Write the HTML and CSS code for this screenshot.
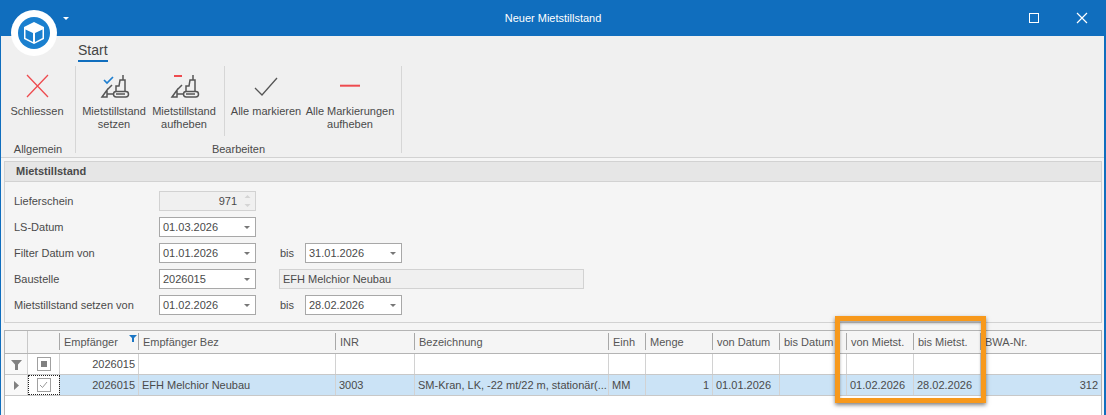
FILE: index.html
```html
<!DOCTYPE html>
<html lang="de">
<head>
    <meta charset="UTF-8">
    <title>Neuer Mietstillstand</title>
    <link rel="stylesheet" href="styles.css">
</head>
<body>

    <div class="window">

        <!-- Title bar -->
        <div class="titlebar">
            <div class="title">Neuer Mietstillstand</div>
            <div class="win-buttons">
                <svg width="46" height="36" viewBox="0 0 46 36"><rect x="15.500" y="13.500" width="9" height="9" fill="none" stroke="#fff"/></svg>
                <svg width="46" height="36" viewBox="0 0 46 36"><path d="M17 13l10 10M27 13l-10 10" fill="none" stroke="#fff" stroke-width="1.2"/></svg>
            </div>
        </div>

        <!-- App button -->
        <div class="app-button">
            <svg width="46" height="46" viewBox="0 0 46 46">
                <circle cx="23" cy="23" r="23" fill="#fff"/>
                <circle cx="23" cy="23" r="16" fill="#1b80cf"/>
                <path d="M23 12l10 5v12l-10 5-10-5V17z" fill="#fff"/>
                <path d="M14.500 19.500l7.500 3.500v9l-7.500-4zM31.500 19.500L24 23v9l7.500-4z" fill="#1b80cf"/>
            </svg>
        </div>
        <svg class="qat-arrow" width="6" height="3" viewBox="0 0 6 3"><path d="M0 0h6L3 3z" fill="#fff"/></svg>

        <!-- Ribbon -->
        <div class="ribbon">
            <div class="tabs">
                <span class="tab">Start</span>
            </div>
            <div class="groups">
                <div class="group group-allgemein">
                    <div class="group-items">
                        <div class="rb-btn btn-close">
                            <svg width="32" height="32" viewBox="0 0 32 32"><path d="M6 5l21 22M27 5L6 27" fill="none" stroke="#ee4b4f" stroke-width="1.300"/></svg>
                            <span>Schliessen</span>
                        </div>
                    </div>
                    <div class="group-label">Allgemein</div>
                </div>

                <div class="group group-bearbeiten">
                    <div class="group-items">
                        <div class="rb-btn btn-mst">
                            <svg width="32" height="32" viewBox="0 0 32 32">
                                <path d="M6 10l3 3 6-6" fill="none" stroke="#1e7fd0" stroke-width="1.700"/>
                                <g fill="none" stroke="#555" stroke-width="1.500">
                                    <rect x="15.500" y="21.500" width="15" height="5.500" rx="2.700"/>
                                    <path d="M18 21v-5h3l1-6h5v11M25 5v5M18 24h9"/>
                                    <path d="M4 27l5-7v7zM9 20l5-5M9 24h6"/>
                                </g>
                            </svg>
                            <span>Mietstillstand<br>setzen</span>
                        </div>
                        <div class="rb-btn btn-mst">
                            <svg width="32" height="32" viewBox="0 0 32 32">
                                <path d="M6 6h8" fill="none" stroke="#ee4b4f" stroke-width="2"/>
                                <g fill="none" stroke="#555" stroke-width="1.500">
                                    <rect x="15.500" y="21.500" width="15" height="5.500" rx="2.700"/>
                                    <path d="M18 21v-5h3l1-6h5v11M25 5v5M18 24h9"/>
                                    <path d="M4 27l5-7v7zM9 20l5-5M9 24h6"/>
                                </g>
                            </svg>
                            <span>Mietstillstand<br>aufheben</span>
                        </div>
                        <div class="rb-sep"></div>
                        <div class="rb-btn btn-all">
                            <svg width="32" height="32" viewBox="0 0 32 32"><path d="M5 18l7 7L27 8" fill="none" stroke="#555" stroke-width="1.300"/></svg>
                            <span>Alle markieren</span>
                        </div>
                        <div class="rb-btn btn-none">
                            <svg width="32" height="32" viewBox="0 0 32 32"><path d="M6 15.700h20" fill="none" stroke="#ee4b4f" stroke-width="2"/></svg>
                            <span>Alle Markierungen<br>aufheben</span>
                        </div>
                    </div>
                    <div class="group-label">Bearbeiten</div>
                </div>
            </div>
        </div>

        <!-- Content -->
        <div class="content">

            <div class="panel">
                <div class="panel-header">Mietstillstand</div>
                <div class="form">
                    <label>Lieferschein</label>
                    <div class="field spin disabled"><span class="num">971</span>
                        <svg width="9" height="16" viewBox="0 0 9 16"><path d="M1.500 5l3-3 3 3zM1.500 11l3 3 3-3z" fill="#d4d4d4"/></svg>
                    </div>
                    <div class="empty"></div><div class="empty"></div>

                    <label>LS-Datum</label>
                    <div class="field">01.03.2026<i class="arrow"></i></div>
                    <div class="empty"></div><div class="empty"></div>

                    <label>Filter Datum von</label>
                    <div class="field">01.01.2026<i class="arrow"></i></div>
                    <span class="bis">bis</span>
                    <div class="field">31.01.2026<i class="arrow"></i></div>

                    <label>Baustelle</label>
                    <div class="field">2026015<i class="arrow"></i></div>
                    <div class="field disabled wide">EFH Melchior Neubau</div>

                    <label>Mietstillstand setzen von</label>
                    <div class="field">01.02.2026<i class="arrow"></i></div>
                    <span class="bis">bis</span>
                    <div class="field">28.02.2026<i class="arrow"></i></div>
                </div>
            </div>

            <div class="grid">
                <div class="row head">
                    <div class="c"></div>
                    <div class="c"></div>
                    <div class="c sorted">Empfänger<svg width="8" height="7" viewBox="0 0 8 7"><path d="M0 0h8L5 3v4H3V3z" fill="#1b76c4"/></svg></div>
                    <div class="c">Empfänger Bez</div>
                    <div class="c">INR</div>
                    <div class="c">Bezeichnung</div>
                    <div class="c">Einh</div>
                    <div class="c">Menge</div>
                    <div class="c">von Datum</div>
                    <div class="c">bis Datum</div>
                    <div class="c">von Mietst.</div>
                    <div class="c">bis Mietst.</div>
                    <div class="c">BWA-Nr.</div>
                </div>
                <div class="row filter">
                    <div class="c ind"><svg width="11" height="11" viewBox="0 0 11 11"><path d="M0 1h11L7 5.500V11H4V5.500z" fill="#808080"/></svg></div>
                    <div class="c chk"><span class="box"><i></i></span></div>
                    <div class="c right">2026015</div>
                    <div class="c"></div><div class="c"></div><div class="c"></div><div class="c"></div>
                    <div class="c"></div><div class="c"></div><div class="c"></div><div class="c"></div>
                    <div class="c"></div><div class="c last"></div>
                </div>
                <div class="row data">
                    <div class="c ind"><svg width="5" height="9" viewBox="0 0 5 9"><path d="M0 0l5 4.500L0 9z" fill="#808080"/></svg></div>
                    <div class="c chk focus"><span class="box"><svg width="9" height="8" viewBox="0 0 9 8"><path d="M1 4l2.500 2.500L8 1" fill="none" stroke="#999"/></svg></span></div>
                    <div class="c right">2026015</div>
                    <div class="c">EFH Melchior Neubau</div>
                    <div class="c">3003</div>
                    <div class="c">SM-Kran, LK, -22 mt/22 m, stationär(...</div>
                    <div class="c">MM</div>
                    <div class="c right">1</div>
                    <div class="c">01.01.2026</div>
                    <div class="c"></div>
                    <div class="c">01.02.2026</div>
                    <div class="c">28.02.2026</div>
                    <div class="c right last">312</div>
                </div>
            </div>

        </div>

        <!-- Highlight around the two columns -->
        <div class="highlight"></div>

    </div>

</body>
</html>
```

FILE: styles.css
```css
* {
    margin: 0;
    padding: 0;
    box-sizing: border-box;
}

html, body {
    height: 100%;
    overflow: hidden;
}

body {
    font-family: "Liberation Sans", Arial, sans-serif;
    font-size: 11px;
    color: #4a4a4a;
    background: #fff;
}

.window {
    position: relative;
    height: 415px;
    border-left: 1px solid #106ebe;
    border-right: 2px solid #106ebe;
    display: flex;
    flex-direction: column;
}

/* Title bar */
.titlebar {
    height: 36px;
    margin: 0 -2px 0 -1px;
    background: #106ebe;
    color: #fff;
    display: flex;
    align-items: center;
    justify-content: center;
    position: relative;
    flex-shrink: 0;
}

.win-buttons {
    position: absolute;
    top: 0;
    right: 0;
    display: flex;
}

.win-buttons svg {
    display: block;
}

.app-button {
    position: absolute;
    left: 10px;
    top: 10px;
    width: 46px;
    height: 46px;
}

.qat-arrow {
    position: absolute;
    left: 62px;
    top: 17px;
}

/* Ribbon */
.ribbon {
    height: 122px;
    background: #f0f0f0;
    border-bottom: 1px solid #d2d2d2;
    flex-shrink: 0;
}

.tabs {
    height: 30px;
    padding-left: 77px;
    padding-top: 6px;
}

.tab {
    display: inline-block;
    height: 20px;
    font-size: 14px;
    line-height: 17px;
    color: #444;
    border-bottom: 2px solid #106ebe;
}

.groups {
    display: flex;
    height: 87px;
}

.group {
    display: flex;
    flex-direction: column;
    border-right: 1px solid #d6d6d6;
}

.group-allgemein {
    width: 75px;
}

.group-bearbeiten {
    width: 326px;
}

.group-items {
    display: flex;
    height: 76px;
    padding-left: 3px;
}

.group-label {
    text-align: center;
    height: 11px;
    line-height: 14px;
}

.rb-btn {
    display: flex;
    flex-direction: column;
    align-items: center;
    text-align: center;
    line-height: 13px;
    padding-top: 4px;
    white-space: nowrap;
}

.rb-btn svg {
    margin-bottom: 3px;
}

.btn-close { width: 66px; }
.btn-mst { width: 70px; }
.btn-all { width: 82px; }
.btn-none { width: 86px; }

.rb-sep {
    width: 1px;
    height: 70px;
    background: #d6d6d6;
    margin-left: 5px;
}

/* Content */
.content {
    flex: 1;
    min-height: 0;
    background: #f5f5f5;
    padding: 3px 2px 0 3px;
    display: flex;
    flex-direction: column;
}

.panel {
    height: 162px;
    border: 1px solid #d2d2d2;
    flex-shrink: 0;
}

.panel-header {
    height: 20px;
    background: #e6e6e6;
    border-bottom: 1px solid #d2d2d2;
    font-weight: bold;
    line-height: 19px;
    padding-left: 11px;
}

.form {
    display: grid;
    grid-template-columns: 145px 97px 49px 97px;
    grid-auto-rows: 20px;
    row-gap: 6px;
    padding: 9px 0 0 9px;
    align-items: center;
}

.field {
    height: 20px;
    background: #fff;
    border: 1px solid #a8a8a8;
    line-height: 18px;
    padding-left: 3px;
    position: relative;
}

.field.disabled {
    background: #f0f0f0;
    border-color: #d2d2d2;
}

.spin {
    text-align: right;
    padding-right: 18px;
}

.spin svg {
    position: absolute;
    right: 3px;
    top: 1px;
}

.wide {
    grid-column: 3 / span 2;
    margin-left: 23px;
    width: 305px;
}

.bis {
    padding-left: 24px;
}

.arrow {
    position: absolute;
    right: 5px;
    top: 8px;
    border-left: 3px solid transparent;
    border-right: 3px solid transparent;
    border-top: 3px solid #777;
}

/* Grid */
.grid {
    flex: 1;
    margin-top: 7px;
    background: #fff;
    border-top: 1px solid #b4b4b4;
    border-left: 1px solid #b4b4b4;
    border-right: 1px solid #b4b4b4;
}

.row {
    display: grid;
    grid-template-columns: 23px 32px 79px 197px 79px 194px 37px 67px 67px 67px 67px 67px 1fr;
}

.c {
    padding: 0 3px;
    white-space: nowrap;
    overflow: hidden;
    border-right: 1px solid #d2d2d2;
    display: flex;
    align-items: center;
}

.c.last {
    border-right: 0;
}

.right {
    justify-content: flex-end;
}

.head {
    height: 23px;
    background: #f5f5f5;
    border-bottom: 1px solid #b4b4b4;
    color: #555;
}

.head .c {
    border-right: 0;
    position: relative;
    padding-left: 4px;
}

.head .c::after {
    content: "";
    position: absolute;
    right: 0;
    top: 2px;
    bottom: 3px;
    width: 1px;
    background: #a8a8a8;
}

.head .c:first-child::after {
    top: 0;
    bottom: 0;
    background: #c8c8c8;
}

.head .c:last-child::after {
    display: none;
}

.sorted svg {
    position: absolute;
    right: 2px;
    top: 4px;
}

.filter {
    height: 21px;
    border-bottom: 1px solid #c8c8c8;
}

.data {
    height: 21px;
    background: #cbe3f6;
    border-bottom: 1px solid #c8c8c8;
}

.ind {
    background: #f9f9f9;
    justify-content: center;
    padding: 0;
}

.chk {
    background: #fff;
    justify-content: center;
    padding: 0;
}

.focus {
    outline: 1px dotted #222;
    outline-offset: -1px;
}

.box {
    width: 14px;
    height: 14px;
    border: 1px solid #a0a0a0;
    display: flex;
    align-items: center;
    justify-content: center;
}

.box i {
    width: 6px;
    height: 6px;
    background: #808080;
}

/* Orange frame */
.highlight {
    position: absolute;
    left: 834px;
    top: 316px;
    width: 151px;
    height: 87px;
    border: 5px solid #f7991c;
    box-shadow: 0 2px 4px rgba(0, 0, 0, 0.5), inset 0 2px 3px rgba(0, 0, 0, 0.35);
}
```
